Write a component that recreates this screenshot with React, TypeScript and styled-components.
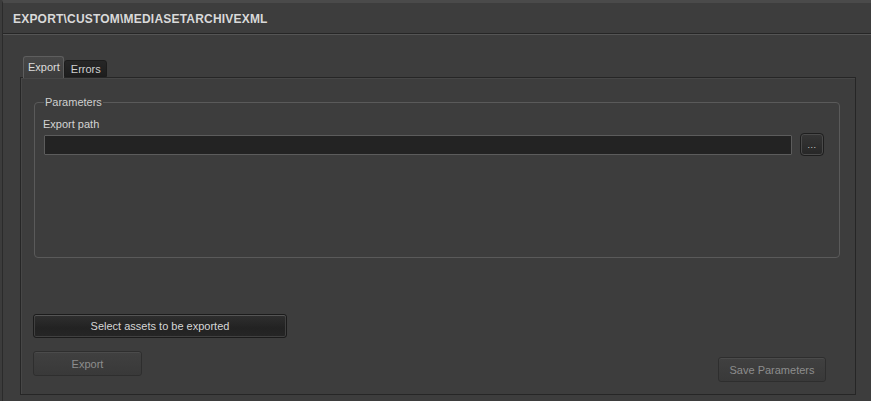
import React from "react";
import styled, { createGlobalStyle } from "styled-components";

const Global = createGlobalStyle`
  html, body { margin: 0; padding: 0; background: #3c3c3c; }
  body { font-family: "Liberation Sans", Arial, sans-serif; font-size: 11px; color: #d2d2d2; }
`;

const Frame = styled.div`
  box-sizing: border-box;
  height: 401px;
  width: 871px;
  margin-left: 2px;
  border-left: 1px solid #2b2b2b;
  border-top: 3px solid #4a4a4a;
  background: #3d3d3d;
  display: flex;
  flex-direction: column;
`;

const Header = styled.div`
  height: 30px;
  display: flex;
  align-items: center;
  padding-left: 10px;
  border-bottom: 1px solid #262626;
  box-shadow: 0 1px 0 #555;
`;

const Title = styled.div`
  font-weight: bold;
  font-size: 12px;
  letter-spacing: 0.2px;
  color: #d9d9d9;
  padding-top: 1px;
`;

const Body = styled.div`
  flex: 1;
  display: flex;
  flex-direction: column;
  padding: 22px 17px 6px 17px;
`;

const TabBar = styled.div`
  display: flex;
  align-items: flex-end;
  padding-left: 3px;
  height: 21px;
  position: relative;
  z-index: 1;
`;

const Tab = styled.div<{ $active?: boolean }>`
  box-sizing: border-box;
  height: ${(p) => (p.$active ? "22px" : "17px")};
  padding: ${(p) => (p.$active ? "3px 3px 0 4px" : "1px 5px 0 6px")};
  border: 1px solid ${(p) => (p.$active ? "#5e5e5e" : "#1c1c1c")};
  border-bottom: ${(p) => (p.$active ? "none" : "1px solid #1c1c1c")};
  border-radius: 3px 3px 0 0;
  background: ${(p) =>
    p.$active
      ? "linear-gradient(#474747, #3d3d3d)"
      : "linear-gradient(#262626, #1e1e1e)"};
  color: ${(p) => (p.$active ? "#dcdcdc" : "#d0d0d0")};
  font-size: 11px;
  line-height: 14px;
  margin-bottom: ${(p) => (p.$active ? "-1px" : "0")};
`;

const Panel = styled.div`
  flex: 1;
  box-sizing: border-box;
  border: 1px solid #262626;
  box-shadow: inset 1px 1px 0 #474747;
  display: flex;
  flex-direction: column;
  padding: 17px 15px 12px 12px;
`;

const Group = styled.fieldset`
  margin: 0;
  box-sizing: border-box;
  height: 163px;
  border: 1px solid #5a5a5a;
  border-radius: 4px;
  padding: 8px 15px 0 9px;
  margin-left: 1px;
`;

const Legend = styled.legend`
  padding: 0 1px;
  margin-left: 0;
  font-size: 11px;
  line-height: 14px;
  color: #cfcfcf;
`;

const FieldLabel = styled.div`
  font-size: 11px;
  line-height: 14px;
  color: #d4d4d4;
  margin-left: -1px;
  margin-bottom: 2px;
`;

const PathRow = styled.div`
  display: flex;
  align-items: center;
  gap: 8px;
`;

const PathInput = styled.div`
  flex: 1;
  box-sizing: border-box;
  height: 20px;
  background: #232323;
  border: 1px solid #5c5c5c;
  border-radius: 1px;
`;

const BrowseButton = styled.div`
  box-sizing: border-box;
  width: 24px;
  height: 23px;
  border-radius: 4px;
  border: 1px solid #1e1e1e;
  box-shadow: inset 0 0 0 1px #4a4a4a;
  background: linear-gradient(#353535, #272727);
  color: #cfcfcf;
  font-size: 9px;
  line-height: 9px;
  display: flex;
  align-items: flex-end;
  justify-content: center;
  padding-bottom: 5px;
  letter-spacing: 0.5px;
`;

const Spacer = styled.div`
  flex: 1;
`;

const Button = styled.div<{ $dark?: boolean; $width: number; $disabled?: boolean }>`
  box-sizing: border-box;
  width: ${(p) => p.$width}px;
  height: ${(p) => (p.$dark ? 24 : 25)}px;
  border-radius: 3px;
  border: 1px solid ${(p) => (p.$dark ? "#1b1b1b" : "#2e2e2e")};
  box-shadow: ${(p) =>
    p.$dark ? "inset 0 1px 0 #555, inset 0 0 0 1px #404040" : "inset 0 1px 0 #4b4b4b"};
  background: ${(p) =>
    p.$dark ? "linear-gradient(#2f2f2f, #222 60%, #262626)" : "linear-gradient(#404040, #393939)"};
  color: ${(p) => (p.$disabled ? "#8d8d8d" : "#d6d6d6")};
  font-size: 11px;
  display: flex;
  align-items: center;
  justify-content: center;
`;

const BottomRow = styled.div`
  display: flex;
  justify-content: space-between;
  align-items: flex-start;
  margin-top: 13px;
  padding-right: 14px;
`;

const SaveWrap = styled.div`
  margin-top: 6px;
`;

export default function App() {
  return (
    <>
      <Global />
      <Frame>
        <Header>
          <Title>EXPORT\CUSTOM\MEDIASETARCHIVEXML</Title>
        </Header>
        <Body>
          <TabBar>
            <Tab $active>Export</Tab>
            <Tab>Errors</Tab>
          </TabBar>
          <Panel>
            <Group>
              <Legend>Parameters</Legend>
              <FieldLabel>Export path</FieldLabel>
              <PathRow>
                <PathInput />
                <BrowseButton>...</BrowseButton>
              </PathRow>
            </Group>
            <Spacer />
            <Button $dark $width={254}>Select assets to be exported</Button>
            <BottomRow>
              <Button $width={109} $disabled>Export</Button>
              <SaveWrap>
                <Button $width={108} $disabled>Save Parameters</Button>
              </SaveWrap>
            </BottomRow>
          </Panel>
        </Body>
      </Frame>
    </>
  );
}
